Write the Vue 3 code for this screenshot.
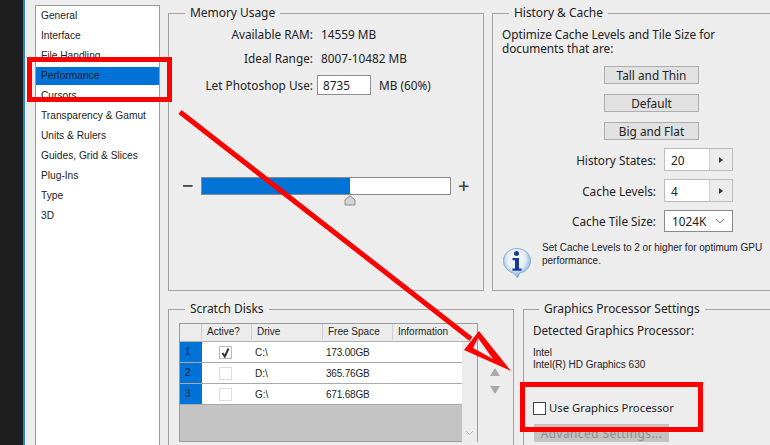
<script setup>
const categories = ['General','Interface','File Handling','Performance','Cursors','Transparency & Gamut','Units & Rulers','Guides, Grid & Slices','Plug-Ins','Type','3D']
const disks = [
  { n: 1, active: true, drive: 'C:\\', free: '173.00GB' },
  { n: 2, active: false, drive: 'D:\\', free: '365.76GB' },
  { n: 3, active: false, drive: 'G:\\', free: '671.68GB' },
]
</script>

<template>
  <div class="page">
    <div class="strip"></div>
    <div class="panel">
      <ul class="list">
        <li v-for="c in categories" :key="c" :class="{ sel: c === 'Performance' }">{{ c }}</li>
      </ul>
      <div class="content">
        <div class="row top">
          <fieldset class="group mem">
            <legend>Memory Usage</legend>
            <div class="stats">
              <span class="lab">Available RAM:</span><span>14559 MB</span>
              <span class="lab">Ideal Range:</span><span>8007-10482 MB</span>
              <span class="lab">Let Photoshop Use:</span>
              <span class="use"><span class="input">8735</span><span>MB (60%)</span></span>
            </div>
            <div class="slider">
              <span class="sign">−</span>
              <div class="track">
                <div class="fill"></div>
                <svg class="thumb" width="12" height="11" viewBox="0 0 12 11"><path d="M6 .7 11 5v5H1V5Z" fill="#d4d4d4" stroke="#8a8a8a"/></svg>
              </div>
              <span class="sign">+</span>
            </div>
          </fieldset>
          <fieldset class="group hist">
            <legend>History &amp; Cache</legend>
            <p class="opt">Optimize Cache Levels and Tile Size for<br>documents that are:</p>
            <div class="btns">
              <div class="btn">Tall and Thin</div>
              <div class="btn">Default</div>
              <div class="btn">Big and Flat</div>
            </div>
            <div class="fields">
              <span class="lab">History States:</span>
              <div class="spin"><span class="val">20</span><span class="arr"></span></div>
              <span class="lab">Cache Levels:</span>
              <div class="spin"><span class="val">4</span><span class="arr"></span></div>
              <span class="lab">Cache Tile Size:</span>
              <div class="select">
                <span>1024K</span>
                <svg width="10" height="6" viewBox="0 0 10 6"><path d="M1 1l4 4 4-4" fill="none" stroke="#777"/></svg>
              </div>
            </div>
            <div class="note">
              <svg width="30" height="32" viewBox="0 0 30 32">
                <defs>
                  <radialGradient id="bub" cx=".47" cy=".36" r=".62">
                    <stop offset="0" stop-color="#fff"/>
                    <stop offset=".55" stop-color="#e4edf6"/>
                    <stop offset=".85" stop-color="#9dbfe0"/>
                    <stop offset="1" stop-color="#6a9bcb"/>
                  </radialGradient>
                </defs>
                <path d="M15 1.500C7.500 1.500 1.500 6.800 1.500 13.500 1.500 20 6.500 25 12 26.200L15.500 31 17.500 26C24 25 28.500 20 28.500 13.500 28.500 6.800 22.500 1.500 15 1.500Z" fill="url(#bub)" stroke="#86aed4"/>
                <circle cx="14.500" cy="6.500" r="2.500" fill="#183a94"/>
                <path d="M10.500 11h6.500v10.500h2.500v2.200h-9v-2.200H13v-8.300h-2.500Z" fill="#183a94"/>
              </svg>
              <p>Set Cache Levels to 2 or higher for optimum GPU performance.</p>
            </div>
          </fieldset>
        </div>
        <div class="row bottom">
          <fieldset class="group scratch">
            <legend>Scratch Disks</legend>
            <div class="scratch-body">
              <div class="table">
                <div class="thead">
                  <span class="c0"></span><span class="c1">Active?</span><span class="c2">Drive</span><span class="c3">Free Space</span><span class="c4">Information</span>
                </div>
                <div class="tbody">
                  <div class="rows">
                    <div v-for="d in disks" :key="d.n" class="tr">
                      <span class="c0 num">{{ d.n }}</span>
                      <span class="c1 chk">
                        <span class="box" :class="{ on: d.active }">
                          <svg v-if="d.active" width="11" height="11" viewBox="0 0 11 11"><path d="M2.500 6 4.800 9.500 8.500 1.500" fill="none" stroke="#333" stroke-width="2"/></svg>
                        </span>
                      </span>
                      <span class="c2">{{ d.drive }}</span>
                      <span class="c3">{{ d.free }}</span>
                    </div>
                  </div>
                  <div class="scrollcol">
                    <svg width="9" height="6" viewBox="0 0 9 6"><path d="M1 1l3.500 3.500L8 1" fill="none" stroke="#bbb"/></svg>
                  </div>
                </div>
              </div>
              <div class="order">
                <svg width="10" height="8" viewBox="0 0 10 8"><path d="M5 0l5 8H0Z" fill="#a9a9a9"/></svg>
                <svg width="10" height="8" viewBox="0 0 10 8"><path d="M0 0h10L5 8Z" fill="#a9a9a9"/></svg>
              </div>
            </div>
          </fieldset>
          <fieldset class="group gpu">
            <legend>Graphics Processor Settings</legend>
            <div class="det">Detected Graphics Processor:</div>
            <div class="gpu-name">Intel<br>Intel(R) HD Graphics 630</div>
            <div class="use-gpu"><span class="cb"></span>Use Graphics Processor</div>
            <div class="adv">Advanced Settings...</div>
          </fieldset>
        </div>
      </div>
    </div>
    <svg class="marks" width="770" height="445" viewBox="0 0 770 445">
      <g fill="none" stroke="#fe0000">
        <rect x="29.500" y="59.500" width="140" height="40" stroke-width="5"/>
        <rect x="522.500" y="384.500" width="178" height="45" stroke-width="5"/>
        <path d="M180 112 471 339" stroke-width="5"/>
      </g>
      <path d="M479 331 464 350 511 371ZM478 338 473 348 493 359Z" fill="#fe0000" fill-rule="evenodd"/>
    </svg>
  </div>
</template>

<style scoped>
.page { position: relative; width: 770px; height: 445px; overflow: hidden; display: flex; background: #ededed; font-family: "Noto Sans", sans-serif; font-size: 11.800px; color: #222; }
.strip { width: 25px; box-sizing: border-box; flex: none; background: #1f1f1f; border-right: 2px solid #2a85c8; }
.panel { flex: 1; display: flex; padding: 5px 0 0 10px; gap: 8px; min-width: 0; }
.list { list-style: none; margin: 0; padding: 0; width: 125px; height: 460px; flex: none; background: #fff; border: 1px solid #9a9a9a; box-sizing: border-box; font-family: "Liberation Sans", sans-serif; }
.list li { height: 20px; line-height: 19px; padding-left: 5px; font-size: 10.200px; white-space: nowrap; }
.list li.sel { background: #0273d6; height: 18px; line-height: 17px; margin: 1px 0; }
.content { width: 640px; flex: none; display: flex; flex-direction: column; }
.row { display: flex; flex: none; }
.top { gap: 8px; height: 286px; }
.bottom { gap: 9px; margin-top: 10px; height: 200px; }
.group { margin: 0; padding: 0; box-sizing: border-box; border: 1px solid #a2a2a2; min-width: 0; }
.group legend { margin-left: 16px; padding: 0 5px; font-size: 12px; line-height: 16px; letter-spacing: -.05px; }
.mem { width: 316px; height: 286px; }
.hist { width: 290px; height: 286px; padding-left: 9px; }
.hist legend { margin-left: 7px; }
.stats { display: grid; grid-template-columns: 144px auto; column-gap: 8px; grid-template-rows: 24px 24px 30px; align-items: center; margin-top: 1px; }
.lab { text-align: right; }
.use { display: flex; align-items: center; gap: 8px; margin-left: -4px; }
.input { height: 18px; line-height: 19px; padding-left: 5px; background: #fff; border: 1px solid #8f8f8f; width: 47px; }
.slider { display: flex; align-items: center; margin: 77px 0 0 13px; }
.sign { width: 10px; text-align: center; font-size: 20px; font-weight: 500; line-height: 18px; color: #444; }
.track { position: relative; width: 250px; height: 18px; margin: 0 7px 0 9px; box-sizing: border-box; background: #fff; border: 1px solid #8a8a8a; }
.fill { width: 148px; height: 100%; background: #0273d6; }
.thumb { position: absolute; left: 142px; top: 17px; }
.opt { margin: 6px 0 0; line-height: 14px; letter-spacing: -.03px; }
.btns { display: flex; flex-direction: column; gap: 10px; margin: 11px 0 0 102px; }
.btn { width: 95px; height: 18px; line-height: 17px; box-sizing: border-box; text-align: center; background: #e1e1e1; border: 1px solid #adadad; }
.fields { display: grid; grid-template-columns: 154px 69px; column-gap: 8px; grid-template-rows: 23px 23px 22px; row-gap: 8px; margin-top: 8px; align-items: center; }
.spin { display: flex; height: 23px; box-sizing: border-box; background: #fff; border: 1px solid #bcbcbc; }
.val { flex: 1; padding-left: 6px; line-height: 22px; }
.arr { width: 22px; background: #ececec; border-left: 1px solid #d0d0d0; position: relative; }
.arr::after { content: ""; position: absolute; left: 9px; top: 8px; border-left: 4px solid #333; border-top: 3px solid transparent; border-bottom: 3px solid transparent; }
.select { display: flex; height: 22px; align-items: center; justify-content: space-between; padding: 0 7px; box-sizing: border-box; background: #fff; border: 1px solid #8a8a8a; }
.note { display: flex; gap: 10px; margin-top: 15px; }
.note svg { flex: none; }
.note p { margin: -6px 0 0; width: 227px; font-family: "Liberation Sans", sans-serif; font-size: 10px; line-height: 13px; }
.scratch { width: 346px; height: 200px; padding-left: 10px; }
.scratch legend { margin-left: 6px; }
.scratch-body { display: flex; margin-top: 6px; }
.table { width: 299px; height: 119px; box-sizing: border-box; background: #c4c4c4; border: 1px solid #9a9a9a; font-family: "Liberation Sans", sans-serif; font-size: 10px; }
.thead { display: flex; height: 17px; background: #ececec; border-bottom: 1px solid #b0b0b0; line-height: 16px; }
.thead span { height: 16px; padding-left: 5px; border-right: 1px solid #cfcfcf; }
.c0, .c1, .c2, .c3 { box-sizing: border-box; flex: none; }
.c0 { width: 22px; }
.c1 { width: 50px; }
.c2 { width: 71px; padding-left: 3px; }
.c3 { width: 70px; padding-left: 3px; letter-spacing: -.2px; }
.thead .c3 { letter-spacing: 0; }
.thead .c4 { flex: 1; border-right: 0; }
.tbody { display: flex; height: 100px; }
.rows { width: 282px; }
.tr { display: flex; align-items: center; height: 21px; box-sizing: border-box; background: #fff; border-bottom: 1px solid #a9a9a9; }
.num { align-self: stretch; background: #0273d6; padding-left: 5px; line-height: 20px; color: #123; }
.chk { display: flex; justify-content: center; padding-right: 4px; }
.box { width: 13px; height: 13px; box-sizing: border-box; background: #fff; border: 1px solid #ddd; display: flex; align-items: center; justify-content: center; }
.box.on { border-color: #bbb; }
.scrollcol { flex: 1; background: #ececec; display: flex; align-items: flex-end; justify-content: center; padding-bottom: 6px; }
.order { display: flex; flex-direction: column; gap: 10px; margin: 45px 0 0 12px; }
.gpu { width: 280px; height: 200px; padding-left: 9px; }
.gpu legend { margin-left: 6px; }
.det { margin-top: 5px; line-height: 16px; font-size: 11.700px; }
.gpu-name { margin-top: 9px; font-family: "Liberation Sans", sans-serif; font-size: 10px; line-height: 12px; }
.use-gpu { display: flex; align-items: center; gap: 3px; margin-top: 29px; line-height: 16px; font-size: 11.300px; }
.cb { width: 13px; height: 13px; box-sizing: border-box; background: #fff; border: 1px solid #444; }
.adv { width: 135px; height: 18px; margin: 8px 0 0 1px; background: #c2c2c2; color: #8d8d8d; text-align: center; line-height: 18px; letter-spacing: .5px; }
.marks { position: absolute; left: 0; top: 0; pointer-events: none; }
</style>
